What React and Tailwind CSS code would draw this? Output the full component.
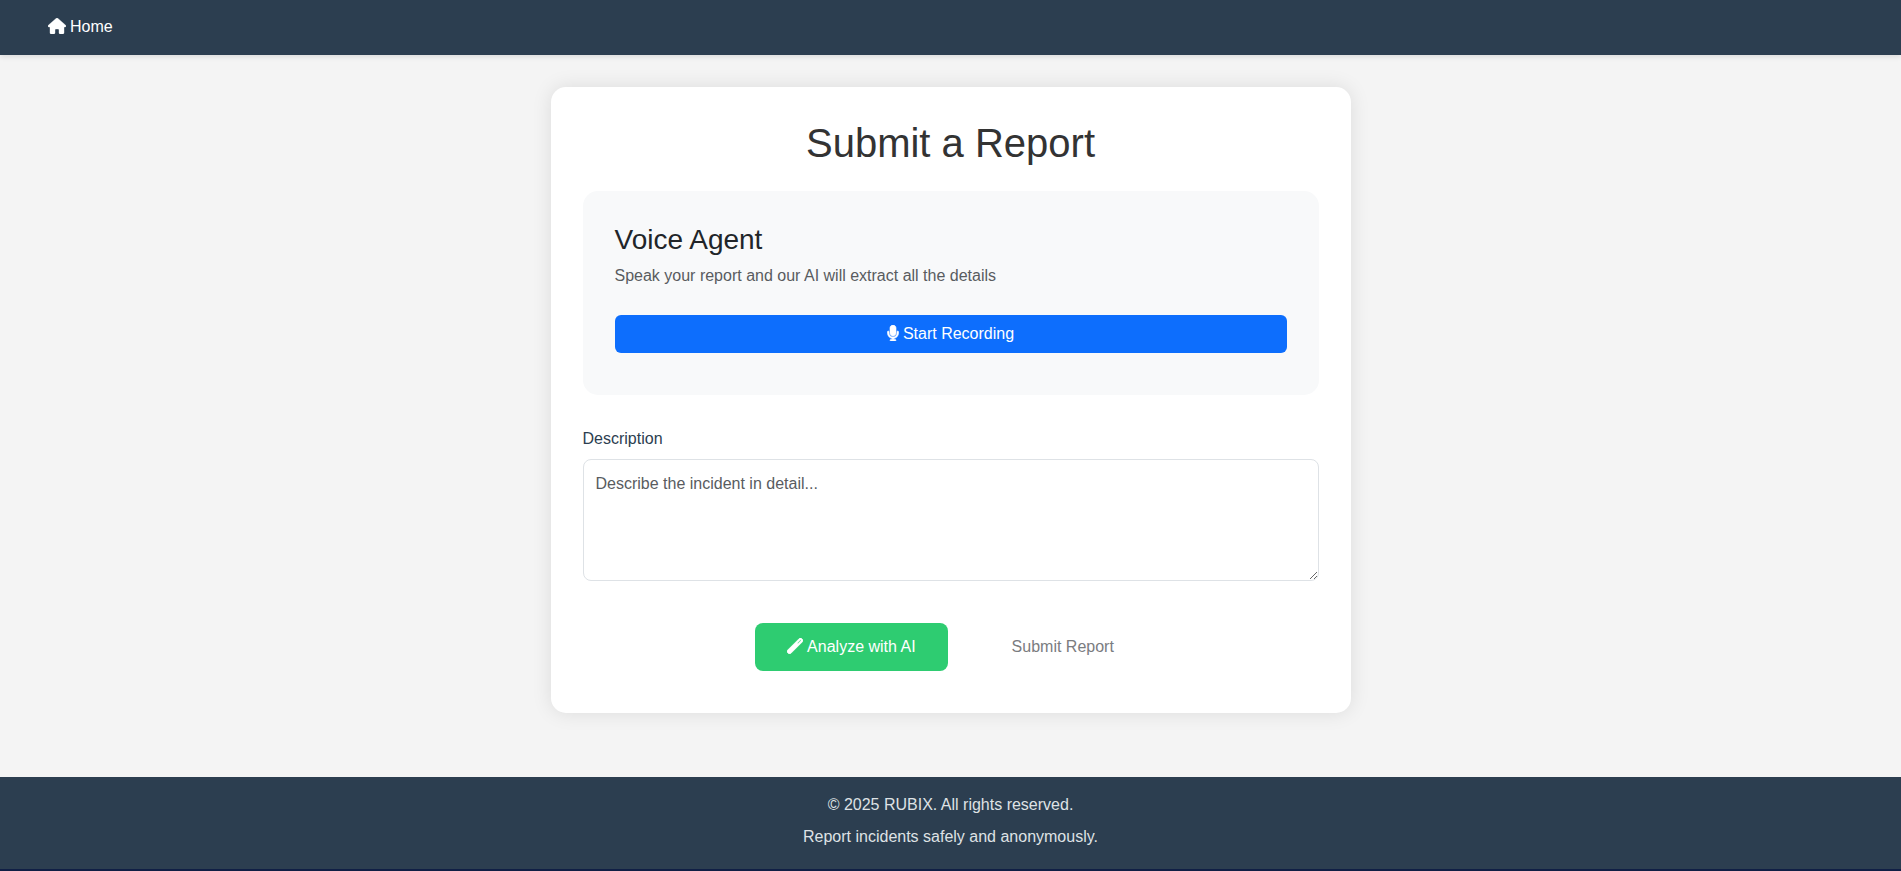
import { FaHouse, FaMicrophone, FaWandMagic } from "react-icons/fa6";

export default function App() {
  return (
    <div className="flex min-h-screen flex-col bg-[#101f45] font-['Liberation_Sans',Arial,sans-serif] text-base text-[#212529]">
      <div className="flex grow flex-col bg-[#f4f4f4]">
        <nav className="relative bg-[#2c3e50] px-12 pt-[15px] pb-4 shadow-[0_2px_5px_rgba(0,0,0,0.1)]">
          <a href="#home" className="flex h-6 items-center gap-1 text-white">
            <FaHouse className="mb-0.5 h-4 w-[18px]" strokeWidth="12" aria-hidden="true" />
            Home
          </a>
        </nav>

        <main className="grow px-4 pt-8 pb-16">
          <section className="mx-auto max-w-[800px] rounded-[15px] bg-white px-8 pt-8 pb-[42px] shadow-[0_0_20px_rgba(0,0,0,0.1)]">
            <h1 className="mb-6 text-center text-[40px] leading-[48px] text-[#333333]">
              Submit a Report
            </h1>

            <div className="mb-8 rounded-[15px] bg-[#f8f9fa] px-8 pt-8 pb-[42px]">
              <h2 className="mb-2 text-[28px] leading-[33px]">Voice Agent</h2>
              <p className="mb-[27px] leading-6 text-[#595c5f]">
                Speak your report and our AI will extract all the details
              </p>
              <button
                type="button"
                className="flex h-[38px] w-full items-center justify-center gap-1 rounded-md bg-[#0d6efd] text-white"
              >
                <FaMicrophone className="mb-0.5 h-4 w-3" strokeWidth="20" aria-hidden="true" />
                Start Recording
              </button>
            </div>

            <form>
              <label htmlFor="description" className="mb-2 block leading-6 text-[#2c3e50]">
                Description
              </label>
              <textarea
                id="description"
                rows={4}
                placeholder="Describe the incident in detail..."
                className="block h-[122px] w-full resize-y rounded-lg border border-[#dee2e6] bg-white p-3 leading-6 placeholder:text-[#595c5f]"
              />
              <div className="mt-[42px] flex justify-center gap-8">
                <button
                  type="button"
                  className="flex h-12 items-center gap-1 rounded-lg bg-[#2ecc71] px-8 text-white"
                >
                  <FaWandMagic className="mb-0.5 size-4" strokeWidth="24" aria-hidden="true" />
                  Analyze with AI
                </button>
                <button type="button" disabled className="h-12 px-8 text-[#7a7c7f]">
                  Submit Report
                </button>
              </div>
            </form>
          </section>
        </main>

        <footer className="bg-[#2c3e50] pt-4 pb-5 text-center text-[#dfe2e5]">
          <p className="mb-2 leading-6">© 2025 RUBIX. All rights reserved.</p>
          <p className="leading-6">Report incidents safely and anonymously.</p>
        </footer>
      </div>
      <div className="h-0.5" />
    </div>
  );
}
